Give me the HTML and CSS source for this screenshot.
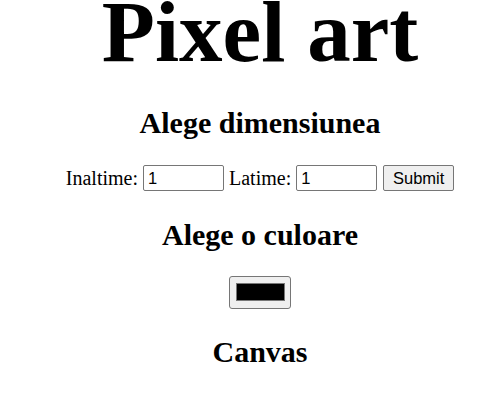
FILE: index.html
```html
<!DOCTYPE html>
<html lang="ro">
<head>
<meta charset="utf-8">
<title>Pixel art</title>
<link rel="stylesheet" href="styles.css">
</head>
<body>
<main class="page">
  <h1 class="title">Pixel art</h1>
  <h2 class="heading heading-size">Alege dimensiunea</h2>
  <form class="size-form" onsubmit="return false;">
    <label class="label" for="inputHeight">Inaltime:</label>
    <input class="num" type="number" id="inputHeight" value="1" min="1">
    <label class="label" for="inputWidth">Latime:</label>
    <input class="num" type="number" id="inputWidth" value="1" min="1">
    <input class="submit" type="submit" value="Submit">
  </form>
  <h2 class="heading heading-color">Alege o culoare</h2>
  <input class="color" type="color" value="#000000">
  <h2 class="heading heading-canvas">Canvas</h2>
  <table class="canvas"></table>
</main>
</body>
</html>
```
FILE: styles.css
```css
html, body {
  margin: 0;
  padding: 0;
  background: #ffffff;
  overflow: hidden;
}

.page {
  display: flex;
  flex-direction: column;
  align-items: center;
  padding-left: 28px;
  font-family: "Liberation Serif", "Times New Roman", serif;
  color: #000;
}

.title {
  margin: 0;
  font-size: 87px;
  line-height: 63px;
  font-weight: bold;
}

.heading {
  margin: 0;
  font-size: 30px;
  line-height: 34px;
  font-weight: bold;
}

.heading-size { margin-top: 43px; }
.heading-color { margin-top: 27px; }
.heading-canvas { margin-top: 26px; }

.size-form {
  display: flex;
  align-items: center;
  gap: 5px;
  height: 26px;
  margin-top: 25px;
}

.label {
  font-size: 20px;
  line-height: 23px;
}

.num {
  box-sizing: border-box;
  width: 81px;
  height: 26px;
  margin: 0;
  padding: 1px 3px 1px 4px;
  border: 1px solid #767676;
  border-radius: 2px;
  background: #fff;
  color: #000;
  font-family: "Liberation Sans", Arial, sans-serif;
  font-size: 16.5px;
  -moz-appearance: textfield;
}

.num::-webkit-outer-spin-button,
.num::-webkit-inner-spin-button {
  -webkit-appearance: none;
  margin: 0;
}

.submit {
  box-sizing: border-box;
  width: 71px;
  height: 26px;
  margin: 0 0 0 1px;
  padding: 1px 6px;
  border: 1px solid #767676;
  border-radius: 2px;
  background: #efefef;
  color: #000;
  font-family: "Liberation Sans", Arial, sans-serif;
  font-size: 16.5px;
}

.color {
  -webkit-appearance: none;
  appearance: none;
  box-sizing: border-box;
  width: 62px;
  height: 33px;
  margin: 24px 0 0;
  padding: 0;
  border: 1px solid #767676;
  border-radius: 3px;
  background: #efefef;
}

.color::-webkit-color-swatch-wrapper {
  padding: 6px 5px 7px 6px;
}

.color::-webkit-color-swatch {
  border: 1px solid #777;
  border-radius: 0;
}

.canvas {
  border-collapse: collapse;
  margin-top: 10px;
}
```
